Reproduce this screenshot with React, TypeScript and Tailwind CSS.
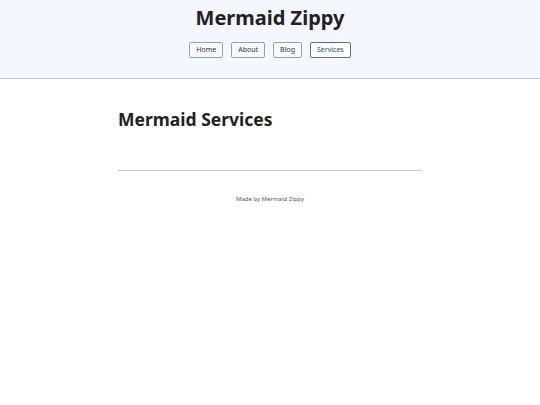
export default function App() {
  const links = ['Home', 'About', 'Blog', 'Services'];
  return (
    <div className="min-h-screen bg-white text-[#222] font-['Noto_Sans',sans-serif]">
      <header className="h-[79px] bg-[#f5f7fe] border-b border-[#c9cbd3] flex flex-col items-center pt-[5px]">
        <h1 className="text-[20px] font-bold leading-[26px]">Mermaid Zippy</h1>
        <nav className="mt-[11px] flex gap-[8px]">
          {links.map(l => (
            <a
              key={l}
              className={
                l === 'Services'
                  ? 'h-[16px] px-[6px] flex items-center text-[7px] rounded-[2px] border border-[#5a6f99] bg-white text-[#2c4a7c]'
                  : 'h-[16px] px-[6px] flex items-center text-[7px] rounded-[2px] border border-[#9aa0ab] bg-[#f8f9fb] text-[#333]'
              }
            >
              {l}
            </a>
          ))}
        </nav>
      </header>
      <main className="w-[304px] mx-auto">
        <h2 className="mt-[27px] text-[17.5px] font-bold leading-[26px]">Mermaid Services</h2>
        <hr className="mt-[38px] border-t border-[#c8c8c8]" />
        <footer className="mt-[24px] text-center text-[6px] text-[#555]">Made by Mermaid Zippy</footer>
      </main>
    </div>
  );
}
